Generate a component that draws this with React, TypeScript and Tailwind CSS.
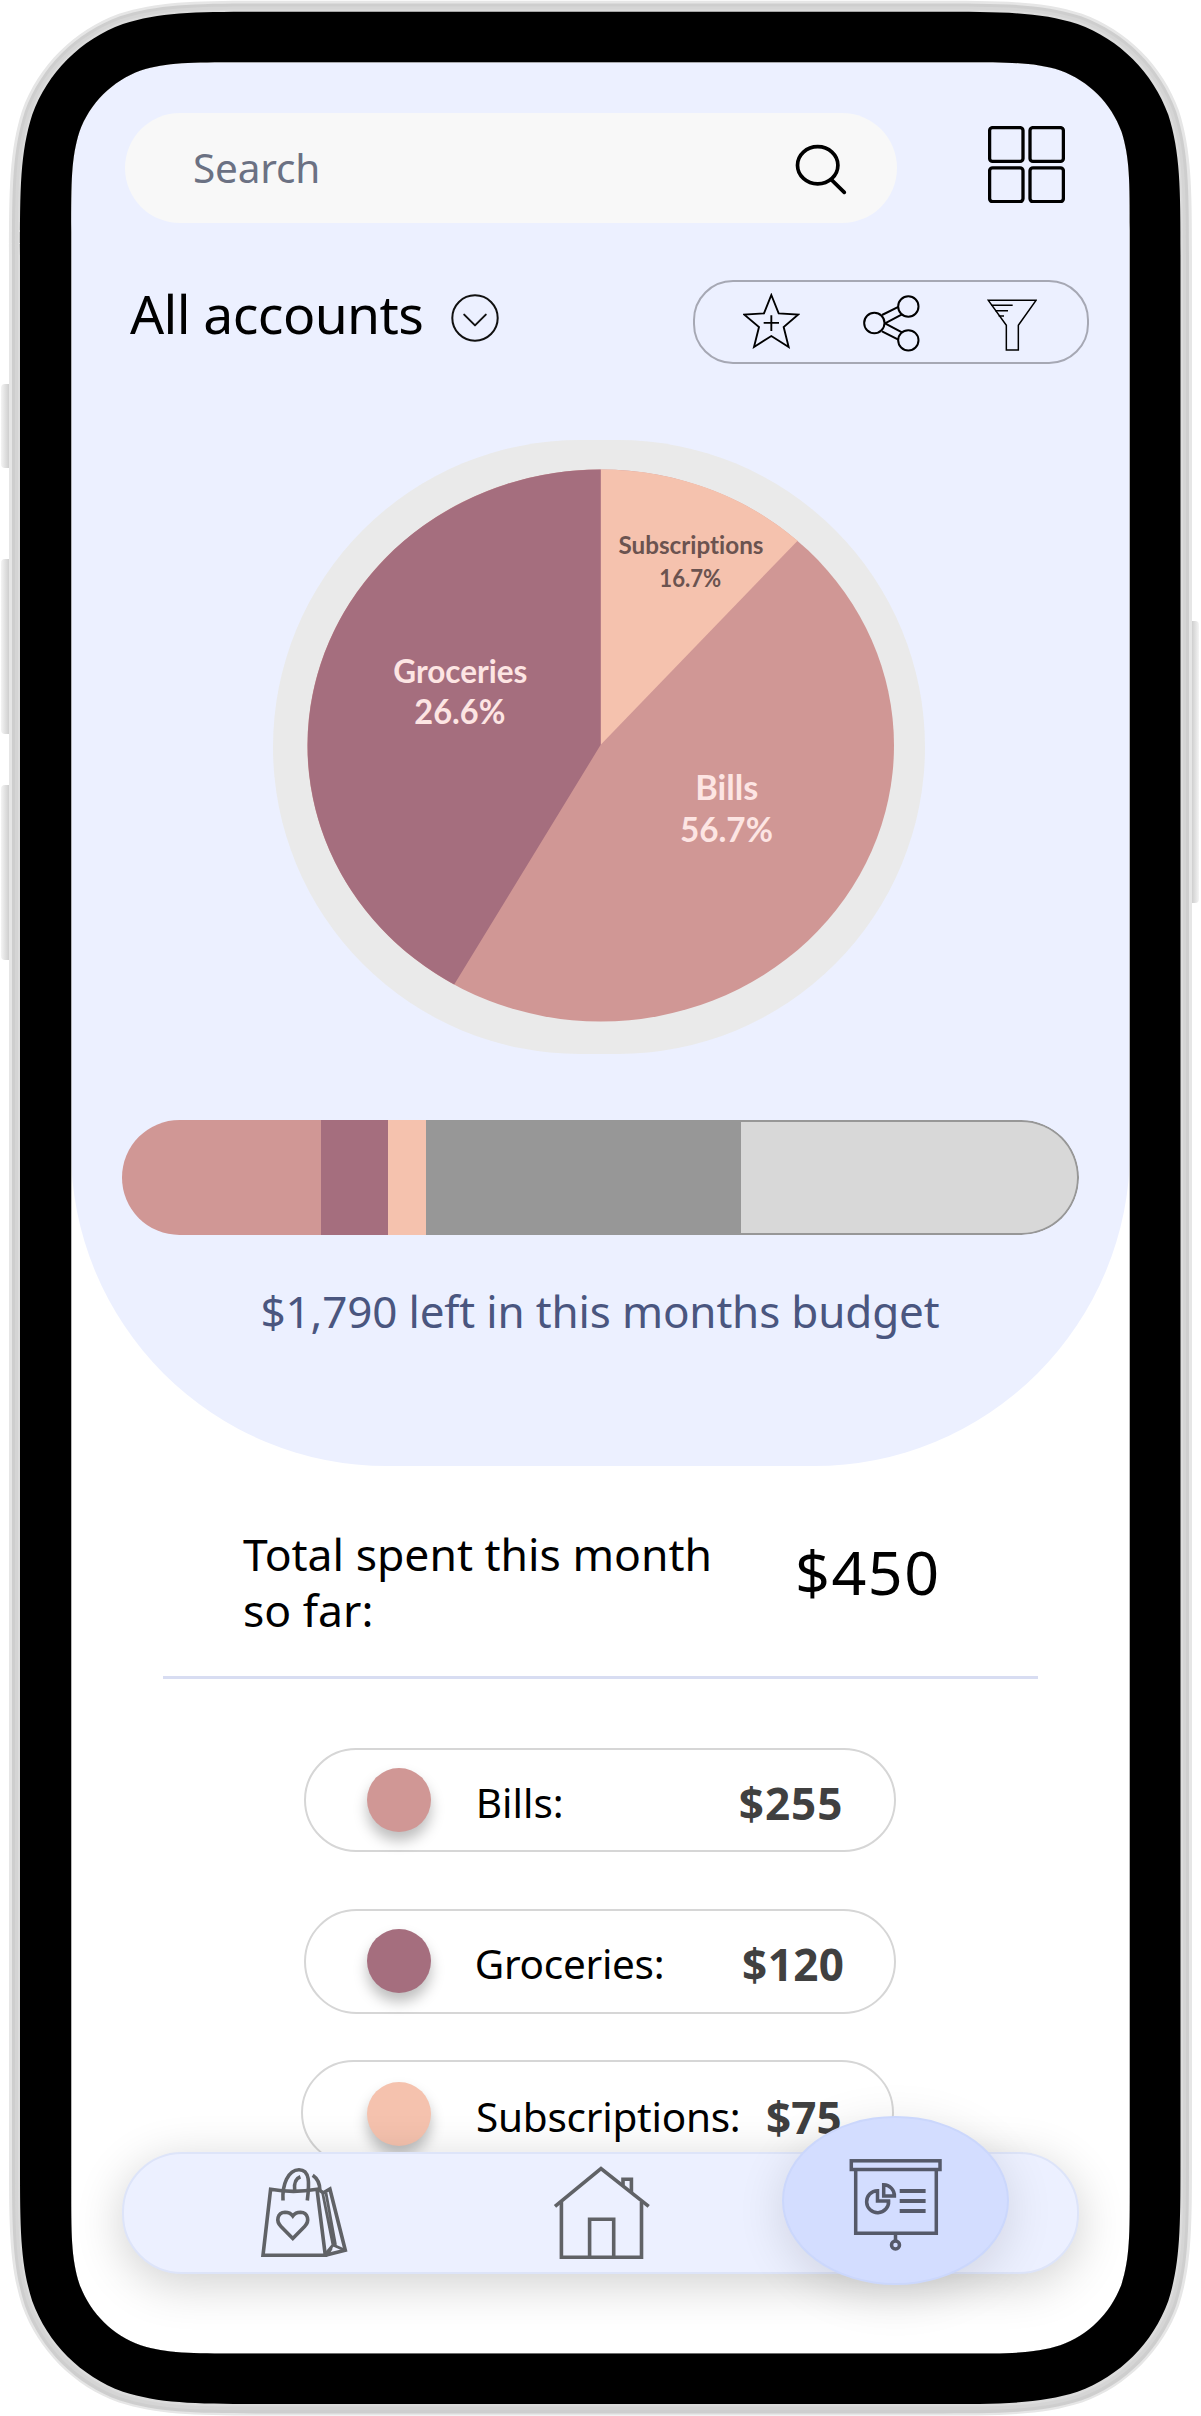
import type { ReactNode } from "react";

/** Closed path of a rectangle with continuous ("squircle") corners. */
function squircle(x0: number, y0: number, x1: number, y1: number, r: number) {
  const corner: number[][] = [
    [1.528665, 0],
    [1.088493, 0],
    [0.868407, 0],
    [0.631494, 0.074911],
    [0.372824, 0.169059],
    [0.169059, 0.372824],
    [0.074911, 0.631494],
    [0, 0.868407],
    [0, 1.088493],
    [0, 1.528665],
  ];
  const back = [...corner].reverse();
  const place = (pts: number[][], cx: number, cy: number, sx: number, sy: number) =>
    pts.map(([a, b]) => `${(cx + sx * a * r).toFixed(2)} ${(cy + sy * b * r).toFixed(2)}`);
  const seg = (p: string[]) => `${p[0]} C${p.slice(1).join(" ")}`;
  return (
    "M" + seg(place(corner, x0, y0, 1, 1)) +
    "L" + seg(place(back, x0, y1, 1, -1)) +
    "L" + seg(place(corner, x1, y1, -1, -1)) +
    "L" + seg(place(back, x1, y0, -1, 1)) +
    "Z"
  );
}

function PhoneBezel() {
  const screen = squircle(71.2, 62.2, 1129.8, 2353.6, 110);
  return (
    <svg className="pointer-events-none absolute inset-0" width="1201" height="2416" viewBox="0 0 1201 2416">
      <path d={squircle(9, 0.8, 1192, 2415.6, 174) + screen} fillRule="evenodd" fill="#e6e6e6" />
      <path d={squircle(12, 3.4, 1189, 2413.4, 171) + screen} fillRule="evenodd" fill="#cecece" />
      <path d={squircle(15, 6.5, 1186, 2410, 168) + screen} fillRule="evenodd" fill="#d5d5d5" />
      <path d={squircle(18, 9.5, 1183, 2406.5, 165) + screen} fillRule="evenodd" fill="#dcdcdc" />
      <path d={squircle(20, 11.8, 1180.5, 2404, 163) + screen} fillRule="evenodd" fill="#000" />
    </svg>
  );
}

function SearchIcon() {
  return (
    <svg width="54" height="54" viewBox="791 138 54 54" className="overflow-visible" fill="none" stroke="#000" strokeWidth="3.7">
      <ellipse cx="817.7" cy="164.3" rx="20.2" ry="18.6" />
      <path d="M831.3 178.6 844.3 191.4" strokeLinecap="round" />
    </svg>
  );
}

function GridIcon() {
  return (
    <svg width="77" height="77" viewBox="989 126 77 77" fill="none" stroke="#000" strokeWidth="3.3">
      <rect x="990.6" y="127.6" width="33.4" height="33.8" rx="3" />
      <rect x="1031" y="127.6" width="33.4" height="33.8" rx="3" />
      <rect x="990.6" y="167.8" width="33.4" height="33.8" rx="3" />
      <rect x="1031" y="167.8" width="33.4" height="33.8" rx="3" />
    </svg>
  );
}

function ChevronCircle() {
  return (
    <svg width="48" height="48" viewBox="0 0 48 48" fill="none" stroke="#111" strokeWidth="2">
      <circle cx="24" cy="24" r="22.7" />
      <path d="M13.2 20.6 24 31.4 34.8 20.6" strokeLinecap="round" strokeLinejoin="round" />
    </svg>
  );
}

function StarPlusIcon() {
  return (
    <svg width="57" height="56" viewBox="190 98 171 168" fill="none" stroke="#000" strokeWidth="5.6">
      <path d="M275 104 297 159 355 163 312 200 327 260 275 227 223 260 238 200 194 163 253 159Z" />
      <path d="M252 187.500H298M275 165V212" />
    </svg>
  );
}

function ShareIcon() {
  return (
    <svg width="57" height="57" viewBox="550 104 171 171" fill="none" stroke="#000" strokeWidth="6">
      <circle cx="584" cy="188" r="30.500" />
      <circle cx="686" cy="138.500" r="30.500" />
      <circle cx="686" cy="240" r="30.500" />
      <path d="M607 164 656 139.500M616 189 667 162M616 189 667 216M607 213 656 238" />
    </svg>
  );
}

function FunnelIcon() {
  return (
    <svg width="50" height="53" viewBox="923 117 150 159" fill="none" stroke="#000" strokeWidth="4.500">
      <path d="M927 121H1070L1017 196V270H981V196Z" />
      <path d="M936 136H1000M948 152H986M958 168H974" />
    </svg>
  );
}

function PieChart() {
  return (
    <div className="ml-[202px] mt-[76.700px] h-[613.300px] w-[652px] shrink-0 rounded-full bg-[#eaeaea]">
      <svg width="652" height="613.300" viewBox="273.200 440.500 652 613.300" className="[font-variant-ligatures:none]" fontFamily="Lato, sans-serif" fontWeight="700" textAnchor="middle">
        <ellipse cx="600.900" cy="746" rx="293.300" ry="276" fill="#d09795" />
        <path d="M600.900 745.300V470A293.300 276 0 0 1 797.800 541.200Z" fill="#f5c2ae" />
        <path d="M600.900 745.300V470A293.300 276 0 0 0 454.400 985Z" fill="#a56e7e" />
        <g fill="#6b5350">
          <text x="691.200" y="554.300" fontSize="24" textLength="145" lengthAdjust="spacingAndGlyphs">Subscriptions</text>
          <text x="690.500" y="588" fontSize="25" textLength="62" lengthAdjust="spacingAndGlyphs">16.7%</text>
        </g>
        <g fill="#fde5e3">
          <text x="460.500" y="683.400" fontSize="32.500" textLength="134" lengthAdjust="spacingAndGlyphs">Groceries</text>
          <text x="460" y="724.600" fontSize="33.500" textLength="91" lengthAdjust="spacingAndGlyphs">26.6%</text>
          <text x="727" y="800.600" fontSize="34.500" textLength="63" lengthAdjust="spacingAndGlyphs">Bills</text>
          <text x="726.600" y="843" fontSize="34.500" textLength="93" lengthAdjust="spacingAndGlyphs">56.7%</text>
        </g>
      </svg>
    </div>
  );
}

function BudgetBar() {
  return (
    <div className="ml-[51px] mt-[66.600px] flex h-[115px] w-[956.700px] shrink-0 overflow-hidden rounded-full">
      <div className="w-[199.300px] bg-[#d09795]" />
      <div className="w-[66.700px] bg-[#a56e7e]" />
      <div className="w-[38.400px] bg-[#f5c2ae]" />
      <div className="w-[314.300px] bg-[#979797]" />
      <div className="flex-1 rounded-r-full border-y-2 border-r-2 border-[#979797] bg-[#d8d8d8]" />
    </div>
  );
}

function ExpenseRow(props: { label: ReactNode; amount: string; dot: string; className: string; labelClass: string; amountClass: string }) {
  return (
    <div className={`flex h-[104.600px] w-[592.600px] shrink-0 rounded-full border-[2.300px] border-[#d6d6d6] ${props.className}`}>
      <div className={`size-16 shrink-0 rounded-full shadow-[0_9px_14px_rgba(0,0,0,0.26)] ${props.dot}`} />
      <div className={`whitespace-nowrap text-[40.500px] leading-[64px] text-black ${props.labelClass}`}>{props.label}</div>
      <div className={`ml-auto whitespace-nowrap text-[44px] font-bold leading-[64px] text-[#404040] ${props.amountClass}`}>{props.amount}</div>
    </div>
  );
}

function BagIcon() {
  return (
    <svg width="96" height="92" viewBox="0 -4 96 92" className="overflow-visible" fill="none" stroke="#606266" strokeWidth="3.600" strokeLinejoin="miter">
      <path d="M8 84.300 15.600 18.300Q38 22.500 62 18.300L70.300 84.300Z" />
      <path d="M28 29.500C27 14 33-1.300 44-1.300S54.500 12 52.300 29.500" />
      <path d="M39.700 19.500C38.800 12 40.500 7.500 45.400 5.700" />
      <path d="M57.700 4.300C62.500 7.500 65 14 65 20" />
      <path d="M62.600 18.300 68.400 21.700 74.900 18 90.300 79.300 70.300 84.300" />
      <path d="M67.600 21.700 78 74M70.500 83 78 74 90 79.300M71 22 80.500 74M73.500 82 76.500 77" strokeWidth="2.800" />
      <path d="M37.800 67.500 26 55.500C20.500 50 22.500 41.500 30 41.300 34 41.300 36 42.500 37.800 45 39.600 42.500 41.600 41.300 45.600 41.300 53 41.500 55 50 49.600 55.500Z" />
    </svg>
  );
}

function HouseIcon() {
  return (
    <svg width="98" height="94" viewBox="553 2165 98 94" className="overflow-visible" fill="none" stroke="#606266" strokeWidth="3.600">
      <path d="M555 2205.300 601 2167.500 648.700 2205.300" />
      <path d="M561.400 2201V2256.200H641.500V2201" />
      <path d="M589.600 2256V2218.300H613.700V2256" />
      <path d="M623 2184.500V2178.200H631.400V2191" />
    </svg>
  );
}

function BoardIcon() {
  return (
    <svg width="94" height="94" viewBox="849 2157 94 94" className="overflow-visible" fill="none" stroke="#555969" strokeWidth="3.500">
      <rect x="851.300" y="2159.800" width="88.700" height="8.700" />
      <path d="M855.700 2168V2232.300H936.300V2168" />
      <path d="M895.500 2233V2239.500" />
      <circle cx="895.500" cy="2244" r="4" />
      <path d="M877.500 2189.700A11 11 0 1 0 888.600 2200H877.500Z" />
      <path d="M883.700 2183.700V2194.900H894.400A11 11 0 0 0 883.700 2183.700Z" />
      <path d="M899.700 2190H925.600M899.700 2200H925.600M899.700 2210H925.600" strokeWidth="4" />
    </svg>
  );
}

function BottomNav() {
  return (
    <nav className="absolute left-[51px] top-[2090px] flex h-[122px] w-[956.500px] rounded-[60px] border-[2.300px] border-[#dde4f9] bg-[#ecf0ff] shadow-[0_10px_48px_rgba(0,0,0,0.19)]">
      <button className="ml-[130.500px] mt-[12.500px] h-[92px] w-[96px]"><BagIcon /></button>
      <button className="ml-[202px] mt-[12px] h-[94px] w-[98px]"><HouseIcon /></button>
      <button className="-mt-[38px] ml-[131.500px] flex h-[169px] w-[227px] shrink-0 items-start justify-center rounded-[50%] border-[2.300px] border-[#cbd7fc] bg-[#d3ddff] pt-[40px] shadow-[0_10px_48px_rgba(0,0,0,0.12)]">
        <BoardIcon />
      </button>
    </nav>
  );
}

export default function App() {
  return (
    <div className="relative h-[2416px] w-[1201px] overflow-hidden bg-white pl-[71px] pt-[62px] font-['Noto_Sans',sans-serif]">
      <div className="absolute left-px top-[384px] h-[84px] w-2 rounded-l-sm bg-linear-to-r from-[#f4f4f4] to-[#cfcfcf]" />
      <div className="absolute left-px top-[559px] h-[175px] w-2 rounded-l-sm bg-linear-to-r from-[#f4f4f4] to-[#cfcfcf]" />
      <div className="absolute left-px top-[785px] h-[175px] w-2 rounded-l-sm bg-linear-to-r from-[#f4f4f4] to-[#cfcfcf]" />
      <div className="absolute left-[1192px] top-[621px] h-[282px] w-[7px] rounded-r-sm bg-linear-to-l from-[#f4f4f4] to-[#cfcfcf]" />

      <main className="relative h-[2292px] w-[1059px] overflow-hidden rounded-[90px] bg-white">
        <section className="flex h-[1404px] flex-col rounded-b-[316px] bg-[#ecf0ff] pt-[51.300px]">
          <div className="flex h-[110px] shrink-0 items-center pl-[53.500px]">
            <div className="flex h-[110px] w-[772px] items-center justify-between rounded-full bg-[#f8f8f8] pl-[68.500px] pr-[51.500px]">
              <span className="text-[40.500px] leading-[60px] tracking-[-0.200px] text-[#6b7183]">Search</span>
              <div className="-mt-[5px]"><SearchIcon /></div>
            </div>
            <div className="ml-[91.500px] -mt-[8px]"><GridIcon /></div>
          </div>

          <div className="mt-[56.500px] flex h-[84px] shrink-0 items-center pl-[59px]">
            <h1 className="w-[321px] whitespace-nowrap pb-[16px] text-[53.500px] leading-[64px] tracking-[-0.600px] text-black">All accounts</h1>
            <div className="pb-[8px]"><ChevronCircle /></div>
            <div className="ml-[193.700px] flex h-[84.300px] w-[396px] items-center rounded-[40px] border-[2.300px] border-[#a6a8b4]">
              <div className="ml-[48px] -mt-[2px]"><StarPlusIcon /></div>
              <div className="ml-[63px] mt-[3px]"><ShareIcon /></div>
              <div className="ml-[67.500px] mt-[7px]"><FunnelIcon /></div>
            </div>
          </div>

          <PieChart />
          <BudgetBar />
          <p className="ml-[189.500px] mt-[45.500px] whitespace-nowrap text-[44px] leading-[60px] tracking-[-0.160px] text-[#4a567f]">
            $1,790 left in this months budget
          </p>
        </section>

        <section className="flex flex-col pt-[59.500px]">
          <div className="flex h-[112px]">
            <p className="ml-[172px] w-[552px] text-[44.500px] leading-[56px] text-black">
              Total spent this month<br />so far:
            </p>
            <p className="text-[61px] leading-[91px] tracking-[1.500px] text-black">$450</p>
          </div>
          <div className="ml-[92px] mt-[38.500px] h-[2.700px] w-[875px] bg-[#d8ddf2]" />
          <ExpenseRow label="Bills:" amount="$255" dot="bg-[#d09795]" className="ml-[232.800px] mt-[69px] pl-[61.500px] pr-[51px] pt-[18px]" labelClass="ml-[44.500px] mt-[3px]" amountClass="mt-[3px] tracking-[1px]" />
          <ExpenseRow label="Groceries:" amount="$120" dot="bg-[#a56e7e]" className="ml-[232.800px] mt-[57px] pl-[61px] pr-[50px] pt-[18px]" labelClass="ml-[44px] mt-[3px] tracking-[-0.300px]" amountClass="mt-[3px] tracking-[0.400px]" />
          <ExpenseRow label="Subscriptions:" amount="$75" dot="bg-[#f5c2ae]" className="ml-[230px] mt-[46.500px] pl-[63.500px] pr-[50px] pt-[20px]" labelClass="ml-[45.500px] mt-[3px] tracking-[-0.250px]" amountClass="mt-[3px]" />
        </section>

        <BottomNav />
      </main>

      <PhoneBezel />
    </div>
  );
}
